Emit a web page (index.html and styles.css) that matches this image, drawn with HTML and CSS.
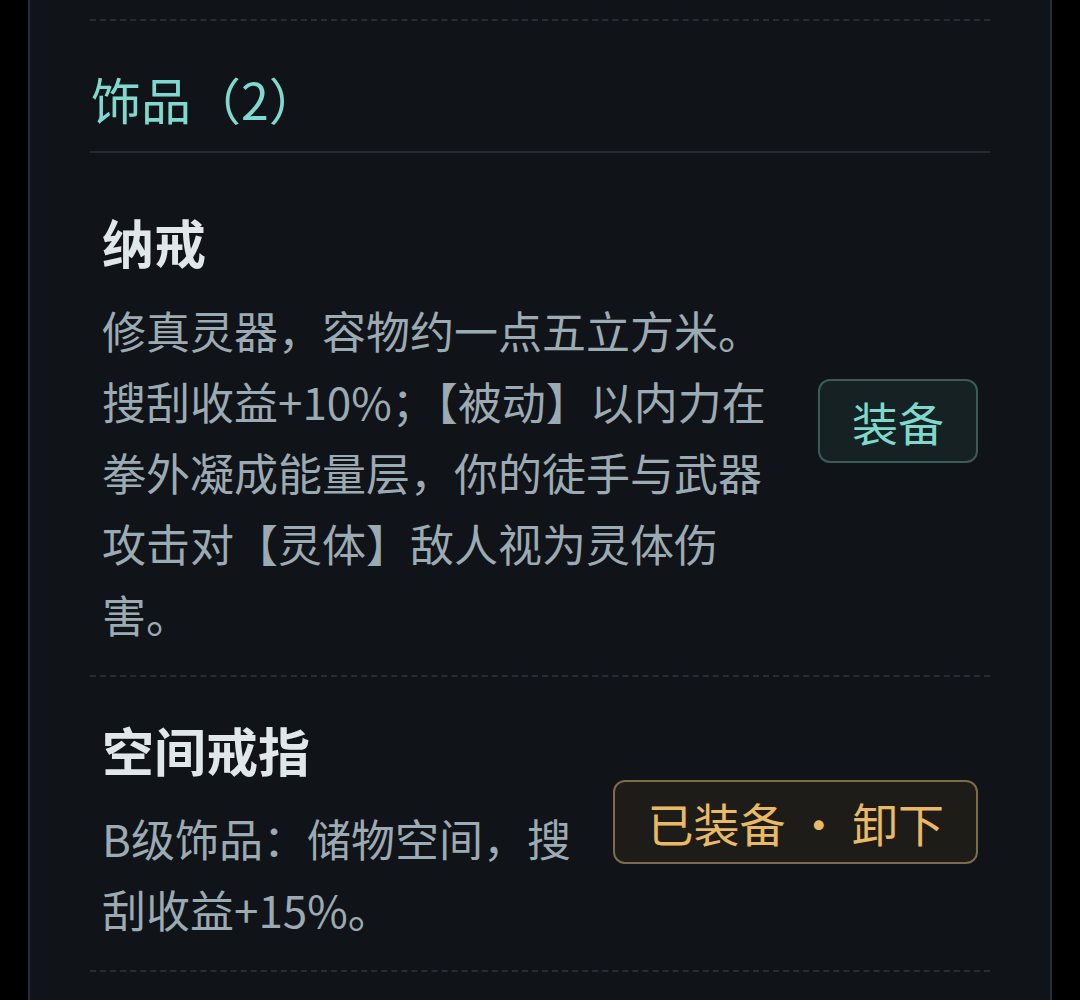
FILE: index.html
```html
<!DOCTYPE html>
<html lang="zh-CN">
<head>
    <meta charset="UTF-8">
    <meta name="viewport" content="width=device-width, initial-scale=1.0">
    <title>饰品</title>
    <link rel="stylesheet" href="styles.css">
</head>
<body>
<div class="panel">
    <div class="divider"></div>

    <h2 class="section-title">饰品（2）</h2>

    <div class="item-list">
        <div class="item">
            <div class="item-info">
                <h3 class="item-name">纳戒</h3>
                <p class="item-desc">修真灵器，容物约一点五立方米。搜刮收益+10%；【被动】以内力在拳外凝成能量层，你的徒手与武器攻击对【灵体】敌人视为灵体伤害。</p>
            </div>
            <button class="btn btn-equip">装备</button>
        </div>

        <div class="item">
            <div class="item-info">
                <h3 class="item-name">空间戒指</h3>
                <p class="item-desc">B级饰品：储物空间，搜刮收益+15%。</p>
            </div>
            <button class="btn btn-equipped">已装备 · 卸下</button>
        </div>
    </div>
</div>
</body>
</html>
```

FILE: styles.css
```css
body {
    margin: 0;
    background-color: #000;
    font-family: "Noto Sans CJK SC", "Noto Sans", sans-serif;
}

.panel {
    margin: 0 28px;
    min-height: 1000px;
    padding: 0 60px;
    background-color: #101419;
    border-left: 2px solid #262c36;
    border-right: 2px solid #262c36;
}

.divider {
    padding-top: 19px;
    border-bottom: 2px dashed #262d38;
}

.section-title {
    margin: 0;
    padding: 42px 1px 18px;
    font-size: 50px;
    font-weight: normal;
    line-height: 70px;
    color: #80d9cf;
    border-bottom: 2px solid #242b35;
}

.item-list {
    padding-top: 16px;
}

.item {
    display: flex;
    align-items: center;
    gap: 40px;
    padding: 38px 12px 25px;
    border-bottom: 2px dashed #262d38;
}

.item-info {
    flex: 1;
}

.item-name {
    margin: 0;
    font-size: 52px;
    font-weight: bold;
    line-height: 70px;
    color: #dfe7eb;
}

.item-desc {
    margin: 18px 0 0;
    font-size: 44px;
    line-height: 71px;
    color: #9caab3;
}

.btn {
    margin-bottom: 16px;
    padding: 8px 32px;
    font-family: inherit;
    font-size: 46px;
    line-height: 64px;
    border-radius: 12px;
    white-space: nowrap;
    cursor: pointer;
}

.btn-equip {
    color: #7fd8cc;
    background-color: #162124;
    border: 2px solid #3b5a5a;
}

.btn-equipped {
    color: #e9b965;
    background-color: #1e1c19;
    border: 2px solid #7d6a48;
}
```
